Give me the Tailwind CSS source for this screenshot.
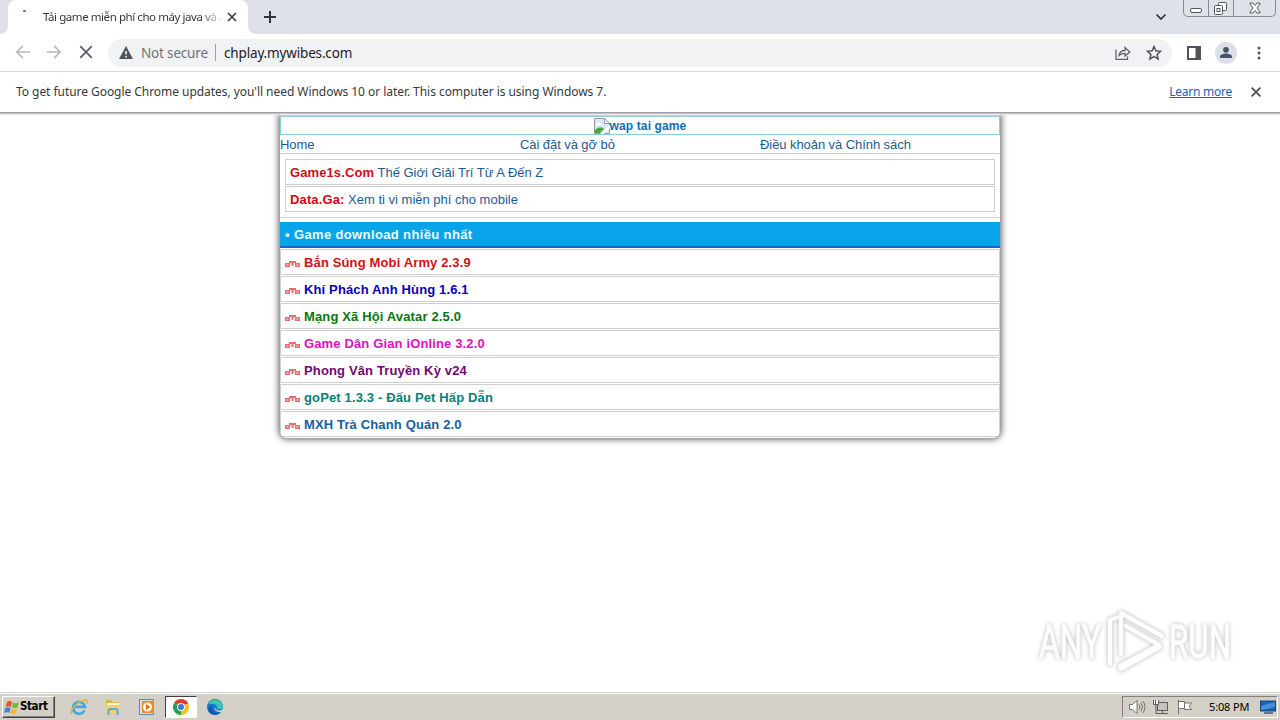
<!DOCTYPE html>
<html lang="vi">
<head>
  <meta charset="UTF-8">
  <meta name="viewport" content="width=device-width, initial-scale=1.0">
  <title>Tải game miễn phí cho máy java và android</title>
  <script src="https://cdn.jsdelivr.net/npm/@tailwindcss/browser@4"></script>
</head>
<body class="w-[1280px] h-[720px] overflow-hidden bg-white flex flex-col font-['Noto_Sans',sans-serif] text-[#36383c] whitespace-nowrap">

  <!-- tab strip -->
  <header class="h-[34px] shrink-0 bg-[#dee1e8] flex items-start">
    <div class="w-2 h-[34px] bg-white"><div class="h-full bg-[#dee1e8] rounded-br-lg"></div></div>
    <div class="w-[240px] h-[34px] bg-white rounded-t-lg flex items-center">
      <div class="w-[35px] h-full pt-[10px] pl-[15px]"><div class="w-[3px] h-[2px] bg-[#4a6fae] rounded-full"></div></div>
      <div class="w-[178px] text-[11.5px] tracking-[-0.43px] bg-linear-to-r from-[#303236] from-88% to-[#30323620] bg-clip-text text-transparent">Tải game miễn phí cho máy java và a</div>
      <svg class="ml-[6px] w-[10px] h-[10px]" viewBox="0 0 10 10" stroke="#3c4043" stroke-width="1.7"><path d="M1 1l8 8M9 1L1 9"/></svg>
    </div>
    <div class="w-2 h-[34px] bg-white"><div class="h-full bg-[#dee1e8] rounded-bl-lg"></div></div>
    <svg class="ml-[8px] mt-[11px] w-[12px] h-[12px]" viewBox="0 0 12 12" stroke="#303236" stroke-width="2"><path d="M6 0v12M0 6h12"/></svg>
    <svg class="ml-auto mt-[13px] w-[12px] h-[8px]" viewBox="0 0 12 8" fill="none" stroke="#303236" stroke-width="1.700"><path d="M1.500 1.500L6 6l4.500-4.500"/></svg>
    <div class="ml-[16px] mr-[4px] w-[93px] h-[17px] border border-t-0 border-[#858993] rounded-b-[5px] flex">
      <div class="w-[25px] border-r border-[#858993] pl-[6px] pt-[8px]"><div class="w-[12px] h-[5px] border border-[#53565e] rounded-[2px] bg-white"></div></div>
      <div class="w-[25px] border-r border-[#858993] pl-[5px] pt-[2px]">
        <svg class="w-[13px] h-[13px]" viewBox="0 0 13 13" fill="white" stroke="#53565e"><rect x="4.500" y=".5" width="8" height="8" rx="1"/><rect x=".5" y="3.500" width="8" height="9" rx="1"/><rect x="3" y="6.500" width="3" height="3"/></svg>
      </div>
      <div class="flex-1 pl-[15px] pt-[2px]">
        <svg class="w-[12px] h-[12px]" viewBox="0 0 12 12"><path d="M1 1h3l2 2.500L8 1h3v1L8 6l3 4v1H8L6 8.500 4 11H1v-1l3-4-3-4z" fill="white" stroke="#53565e"/></svg>
      </div>
    </div>
  </header>

  <!-- toolbar -->
  <div class="h-[38px] shrink-0 bg-white border-b border-[#d5d7da] flex items-center">
    <div class="ml-[15px] w-[93px] flex items-center gap-[17px] pb-px">
      <svg class="w-[15px] h-[14px]" viewBox="0 0 15 14" fill="none" stroke="#b6b8bb" stroke-width="1.700"><path d="M15 7H1.500M8 .8L1.800 7 8 13.200"/></svg>
      <svg class="w-[15px] h-[14px]" viewBox="0 0 15 14" fill="none" stroke="#b6b8bb" stroke-width="1.700"><path d="M0 7h13.500M7 .8L13.200 7 7 13.200"/></svg>
      <svg class="w-[14px] h-[14px]" viewBox="0 0 14 14" stroke="#5f6368" stroke-width="1.900"><path d="M1.200 1.200l11.600 11.600M12.800 1.200L1.200 12.800"/></svg>
    </div>
    <div class="w-[1064px] h-[28px] bg-[#f0f2f4] rounded-full flex items-center pl-[11px] pr-[10px]">
      <svg class="w-[14px] h-[13px]" viewBox="0 0 14 13"><path d="M7 0l7 13H0z" fill="#505458"/><path d="M7 5v3.500M7 10v1.500" stroke="white" stroke-width="1.500"/></svg>
      <span class="ml-[8px] w-[67px] pt-px text-[13.500px] text-[#707377] tracking-[-0.18px]">Not secure</span>
      <div class="ml-[7px] w-px h-[17px] bg-[#a0a3a7]"></div>
      <span class="ml-[8px] pt-px text-[13.500px] text-[#202124] tracking-[-0.16px]">chplay.mywibes.com</span>
      <svg class="ml-auto w-[16px] h-[14px]" viewBox="0 0 16 14" fill="none" stroke="#5f6368" stroke-width="1.300"><path d="M1 3.500v9.800h11.500V10.500M4 9.500c.4-3.500 2.300-5 6-5V1.500L14.800 6 10 10V7.300c-2.800 0-4.600.5-6 2.200z"/></svg>
      <svg class="ml-[15px] w-[16px] h-[16px]" viewBox="0 0 16 16" fill="none" stroke="#505458" stroke-width="1.500"><path d="M8 1.500l1.900 4.300 4.700.5-3.500 3.100 1 4.600L8 11.600 3.900 14l1-4.600L1.400 6.300l4.700-.5z"/></svg>
    </div>
    <svg class="ml-[15px] w-[14px] h-[14px]" viewBox="0 0 14 14"><path d="M0 0h14v14H0zM2 2v10h6.500V2z" fill="#505458" fill-rule="evenodd"/></svg>
    <svg class="ml-[14px] w-[22px] h-[22px]" viewBox="0 0 22 22"><circle cx="11" cy="11" r="11" fill="#dcdfe5"/><circle cx="11" cy="7.800" r="2.900" fill="#47536f"/><path d="M5 16v-1.500c0-2 3.500-3 6-3s6 1 6 3V16z" fill="#47536f"/></svg>
    <svg class="ml-[20px] w-[4px] h-[14px]" viewBox="0 0 4 14" fill="#505458"><circle cx="2" cy="2" r="1.500"/><circle cx="2" cy="7" r="1.500"/><circle cx="2" cy="12" r="1.500"/></svg>
  </div>

  <!-- infobar -->
  <div class="relative z-10 h-[41px] shrink-0 bg-white border-b border-[#a0a0a0] shadow-[0_1px_1px_#c4c4c4,0_2px_2px_#ededed] flex items-center pl-4 pr-[19px] text-[12px]">
    <span class="tracking-[-0.05px]">To get future Google Chrome updates, you'll need Windows 10 or later. This computer is using Windows 7.</span>
    <a class="ml-auto underline text-[#1a62b8] tracking-[-0.25px]">Learn more</a>
    <svg class="ml-[19px] w-[10px] h-[10px]" viewBox="0 0 10 10" stroke="#505458" stroke-width="1.900"><path d="M.7.7l8.600 8.600M9.300.7L.7 9.300"/></svg>
  </div>

  <!-- page -->
  <main class="flex-1 min-h-0 overflow-hidden font-['Liberation_Sans',Arial,sans-serif] text-[13px] leading-[18px] text-[#1b5c93]">
    <div class="mx-auto w-[720px] h-[325px] rounded-b-[7px] shadow-[0_0_7px_1px_#555] bg-white pt-[2px] overflow-hidden">
      <div class="h-[20px] border border-t-2 border-[#8ad0d8] flex items-center justify-center font-bold text-[12px] text-[#0d6eb0]">
        <svg class="w-[16px] h-[16px]" viewBox="0 0 16 16"><path d="M.5.500h10l5 5V15.500H.5z" fill="#d9e7f7" stroke="#9a9a9a"/><path d="M10.500.500v5h5z" fill="white" stroke="#9a9a9a"/><ellipse cx="5" cy="6" rx="3" ry="1.500" fill="white"/><path d="M1 15v-3c4-4 7-3 9-1l-4 4z" fill="#4da53d"/><path d="M6 16L16 7v3l-6 6z" fill="white"/></svg>
        <span class="tracking-[0.12px] pt-px">wap tai game</span>
      </div>
      <div class="h-[19px] grid grid-cols-3 border-b border-[#cfcfcf] leading-[19px] tracking-[-0.07px]">
        <a>Home</a><a>Cài đặt và gỡ bỏ</a><a>Điều khoản và Chính sách</a>
      </div>
      <div class="h-[64px] px-[5px] pt-[5px] border-b border-[#d2d2d2] flex flex-col gap-px">
        <div class="h-[26px] border border-[#cfcfcf] px-1 leading-[25px]"><b class="text-[#cf1017] tracking-[0.1px]">Game1s.Com</b> Thế Giới Giải Trí Từ A Đến Z</div>
        <div class="h-[26px] border border-[#cfcfcf] px-1 leading-[25px]"><b class="text-[#e00010] tracking-[0.13px]">Data.Ga:</b> Xem ti vi miễn phí cho mobile</div>
      </div>
      <h2 class="mt-[4px] h-[26px] bg-[#08a4e9] border-b-2 border-[#1467c8] pl-[5px] leading-[25px] font-bold text-[#effaff] tracking-[0.37px]">• Game download nhiều nhất</h2>
      <ul id="games" class="mt-px flex flex-col gap-px font-bold"></ul>
    </div>
  </main>

  <!-- watermark -->
  <div class="absolute left-[1038px] top-[608px] drop-shadow-[0_0_2px_#bbb]">
    <svg class="w-[200px] h-[66px] font-['Roboto',sans-serif]" viewBox="0 0 200 66">
      <g fill="#fdfdfd" stroke="#fafafa" stroke-width="1.300" font-size="47" font-weight="400">
        <text x="1" y="50" textLength="62" lengthAdjust="spacingAndGlyphs">ANY</text>
        <text x="131" y="50" textLength="62" lengthAdjust="spacingAndGlyphs">RUN</text>
      </g>
      <g fill="none" stroke-linejoin="round" stroke-linecap="round">
        <path d="M83 46V5l41 23M72 56V12l8-3M88 18l33 19-39 21M83 61l39-22" stroke="#e8e8e8" stroke-width="5"/>
        <path d="M83 46V5l41 23M72 56V12l8-3M88 18l33 19-39 21M83 61l39-22" stroke="#fdfdfd" stroke-width="4"/>
      </g>
    </svg>
  </div>

  <!-- taskbar -->
  <footer class="h-[28px] shrink-0 bg-[#d4d0c8] border-t border-[#d4d0c8] shadow-[inset_0_1px_0_white] flex items-center font-['DejaVu_Sans_Condensed','DejaVu_Sans',sans-serif] text-black">
    <button class="ml-[2px] mt-px w-[53px] h-[22px] border border-t-white border-l-white border-r-[#404040] border-b-[#404040] shadow-[inset_-1px_-1px_0_#808080] flex items-center pl-px font-bold text-[11.500px] tracking-[-0.4px]">
      <svg class="w-[16px] h-[15px] shrink-0" viewBox="0 0 16 15"><path d="M3 2c2-1.500 3.500-1 5 0L7 7C5 6 4 6 1.500 7z" fill="#e8552d"/><path d="M9 2.500c2 1 4 1 6-.5l-1.500 5.500c-2 1-3.500 1-5.500 0z" fill="#74b843"/><path d="M1.200 8c2-1 3.500-1 5.500 0l-1.200 5C4 12 2 12 0 13z" fill="#3d87d8"/><path d="M7.700 8.500c2 1 3.500 1 5.500 0l-1.500 5c-2 1-3.500 1-5.200 0z" fill="#f5b92c"/></svg>Start
    </button>
    <svg class="ml-[15px] w-[18px] h-[18px]" viewBox="0 0 18 18" fill="none"><path d="M14.500 12.500A6 6 0 1 1 15 8.800H5" stroke="#43a8e0" stroke-width="2.700"/><path d="M2 16C-1 13 8 2 16 2c2 0 1 3 0 4" stroke="#dfb23c" stroke-width="1.400"/></svg>
    <svg class="ml-[17px] w-[16px] h-[16px]" viewBox="0 0 16 16"><path d="M1 1h5l1 2h7v10H1z" fill="#dcb748"/><path d="M2 4h12v4H2z" fill="#faf3c5"/><path d="M1 6h14v9H1z" fill="#edd070"/><path d="M3.500 16v-4q0-2 2-2h5q2 0 2 2v4" fill="none" stroke="#55aede" stroke-width="2"/></svg>
    <svg class="ml-[18px] w-[16px] h-[16px]" viewBox="0 0 16 16"><rect x=".5" y=".5" width="14" height="15" fill="#cbdff0" stroke="#5a90c4"/><rect x="3" y="2" width="12" height="12" rx="1" fill="#f48a1c"/><circle cx="8.500" cy="8" r="4.500" fill="white"/><path d="M7 5l4.500 3L7 11z" fill="#ea6c12"/></svg>
    <div class="ml-[10px] mt-px w-[32px] h-[22px] bg-white border border-t-[#404040] border-l-[#404040] border-r-white border-b-white flex items-center justify-center">
      <svg class="w-[16px] h-[16px]" viewBox="0 0 16 16"><path d="M8 8L1.070 4A8 8 0 0 1 14.930 4z" fill="#e33b2e"/><path d="M8 8L14.930 4A8 8 0 0 1 8 16z" fill="#fbc116"/><path d="M8 8v8A8 8 0 0 1 1.070 4z" fill="#299e4c"/><path d="M8 4.300h6.900" stroke="#e33b2e"/><circle cx="8" cy="8" r="4" fill="white"/><circle cx="8" cy="8" r="3" fill="#3b79e3"/></svg>
    </div>
    <svg class="ml-[10px] w-[16px] h-[16px]" viewBox="0 0 16 16"><circle cx="8" cy="8" r="8" fill="#1477c9"/><path d="M1 5C4-1 14-1 16 7c0 4-5 4-6 2 1-3-3-5-9-4z" fill="#3fc6b0"/><path d="M6 6c-3 5 1 9 8 7-4 4-10 3-12 0s0-6 4-7z" fill="#1459a8"/><path d="M9 8c-1 3 2 5 7 2v3c-4 1-8-1-8-3z" fill="#d4d0c8"/></svg>
    <div class="ml-auto mr-[2px] mt-px w-[156px] h-[22px] border border-t-[#808080] border-l-[#808080] border-r-white border-b-white flex items-center pl-[5px]">
      <svg class="w-[18px] h-[16px]" viewBox="0 0 18 16" fill="none" stroke="#77756f"><path d="M1.500 5.500h3L9 1.500v13L4.500 10.500h-3z" fill="white"/><path d="M11 5.500q2 2.500 0 5M13 3.500q3 4.500 0 9M15 2q4 6 0 12"/></svg>
      <svg class="ml-[6px] w-[17px] h-[16px]" viewBox="0 0 17 16" fill="none" stroke="#5f5d58"><rect x="5.500" y="3.500" width="10" height="8" fill="#c3c3c0"/><path d="M4 14.500h12M10.500 11.500v3"/><path d="M1.500 1v4.500h5V1M3.500 1v4M4 6v8.500" fill="white"/></svg>
      <svg class="ml-[8px] w-[16px] h-[16px]" viewBox="0 0 16 16" fill="white" stroke="#77756f"><path d="M1.500 1v14.500M1.500 2.500h6v7h-6M7.500 4h7L12 7l2.500 3.500h-7z"/></svg>
      <span class="ml-[16px] font-['Noto_Sans',sans-serif] text-[11px] tracking-[-0.15px]">5:08 PM</span>
      <svg class="ml-auto mr-px w-[16px] h-[14px]" viewBox="0 0 16 14"><rect x=".5" y="1" width="15" height="10" fill="#1765bd" stroke="#16427c"/><path d="M1 6L15 2v5L1 10z" fill="#4790df"/><path d="M4 13h9" stroke="#69798d" stroke-width="2"/></svg>
    </div>
  </footer>

  <script>
    const games = [
      ['Bắn Súng Mobi Army 2.3.9', '#d90d14'],
      ['Khí Phách Anh Hùng 1.6.1', '#0b00b8'],
      ['Mạng Xã Hội Avatar 2.5.0', '#08780c'],
      ['Game Dân Gian iOnline 3.2.0', '#e510bd'],
      ['Phong Vân Truyền Kỳ v24', '#6f0873'],
      ['goPet 1.3.3 - Đấu Pet Hấp Dẫn', '#0b8076'],
      ['MXH Trà Chanh Quán 2.0', '#1560a0'],
    ];

    const icon = `<svg class="w-[15px] h-[8px] mt-[3px] mr-1" viewBox="0 0 15 8"><path d="M0 3h5v4H0zM10 3h5v4h-5zM4 1h7v2H4zM6.500 1h2v5h-2z" fill="#ee6a6c"/><path d="M1.500 4.500h2v1h-2zM11.500 4.500h2v1h-2zM5 3h1v1H5zM9 3h1v1H9z" fill="#fff0ee"/></svg>`;

    document.getElementById('games').innerHTML = games.map(([name, color]) =>
      `<li class="h-[26px] border border-[#cfcfcf] flex items-center pl-1 pt-px leading-[24px] tracking-[0.14px]">${icon}<a style="color:${color}">${name}</a></li>`
    ).join('');
  </script>
</body>
</html>
